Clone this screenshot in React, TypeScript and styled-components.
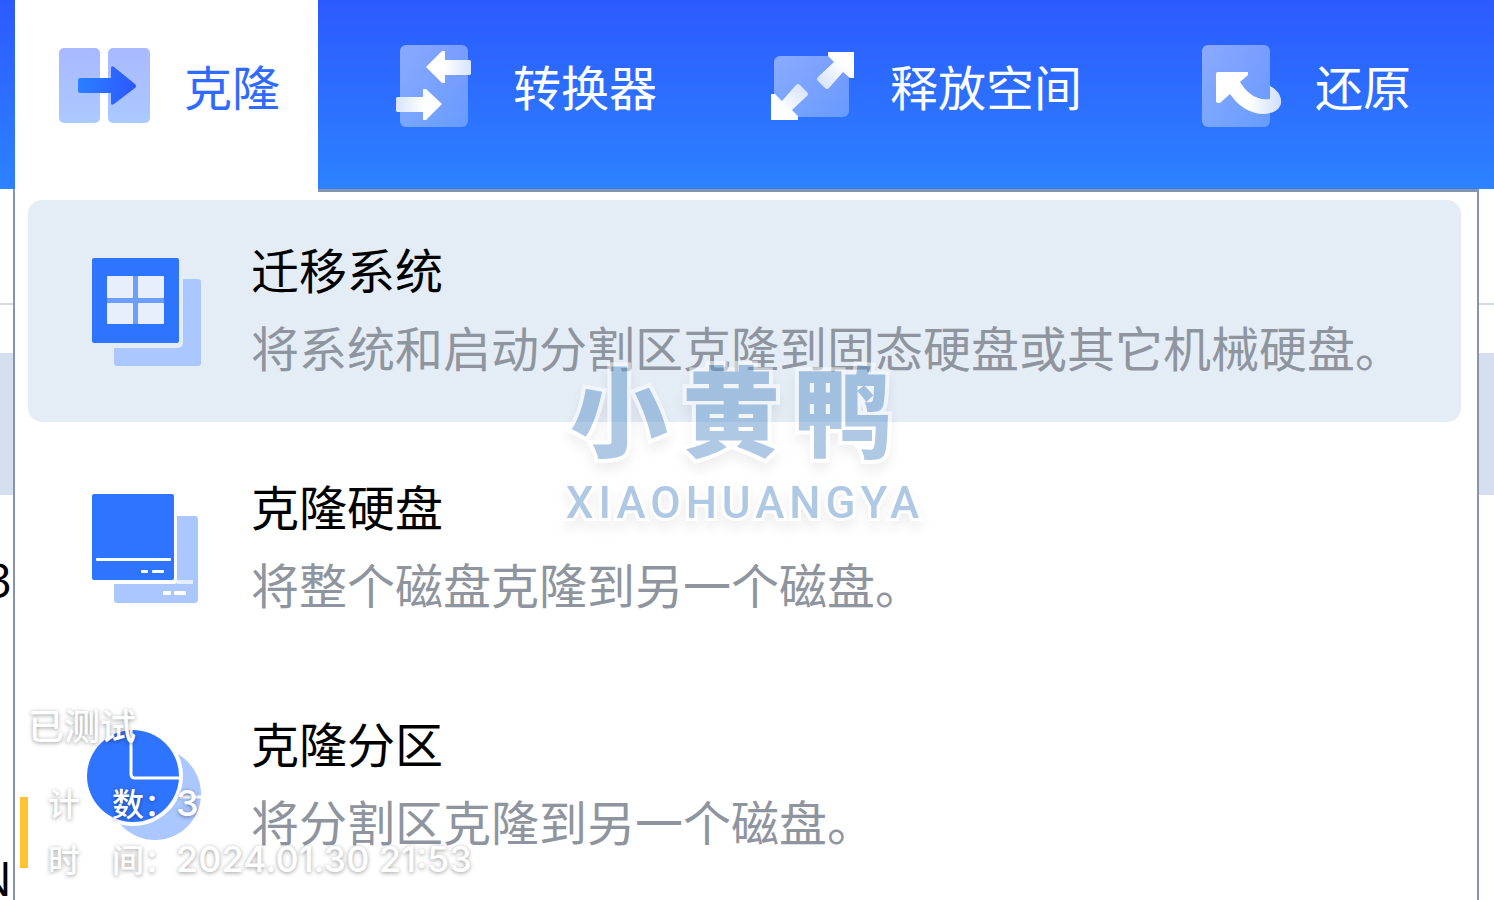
import React from "react";
import styled, { createGlobalStyle } from "styled-components";

const GlobalStyle = createGlobalStyle`
  *, *::before, *::after { box-sizing: border-box; }
  body {
    margin: 0;
    background: #fff;
    font-family: "Noto Sans CJK SC", sans-serif;
    font-weight: 400;
  }
`;

const Page = styled.div`
  position: relative;
  display: flex;
  flex-direction: column;
  height: 100vh;
  overflow: hidden;
`;

const Toolbar = styled.nav`
  display: flex;
  flex: none;
  gap: 26px;
  height: 189px;
  padding-left: 15px;
  background: linear-gradient(#2c5aff, #2c82ff);
`;

const Tab = styled.button<{ $active?: boolean }>`
  position: relative;
  z-index: 2;
  display: flex;
  flex: none;
  align-items: center;
  gap: 34px;
  height: 192px;
  padding: 0 38px 18px 44px;
  border: 0;
  background: ${(p) => (p.$active ? "#fff" : "transparent")};
  color: ${(p) => (p.$active ? "#2f6bff" : "#fff")};
  font: inherit;
  font-size: 48px;
  line-height: 60px;
  white-space: nowrap;
`;

const TabLabel = styled.span`
  padding-bottom: 4px;
`;

const TabIcon = styled.svg`
  flex: none;
  width: 91px;
  height: 84px;
  overflow: visible;
`;

const Content = styled.main`
  position: relative;
  flex: 1;
  min-height: 0;
`;

const Rows = styled.div`
  display: flex;
  flex-direction: column;
  height: 100%;
  overflow: hidden;
`;

const HeadRow = styled.div`
  flex: none;
  height: 116px;
  border-bottom: 2px solid #d3dae6;
`;

const Row = styled.div<{ $height: number; $selected?: boolean }>`
  display: flex;
  flex: none;
  align-items: center;
  height: ${(p) => p.$height}px;
  background: ${(p) => (p.$selected ? "#d5dff0" : "#fff")};
`;

const Cell = styled.span`
  display: flex;
  justify-content: flex-end;
  width: 12px;
  color: #000;
  font-family: "Open Sans", sans-serif;
  font-weight: 500;
  font-size: 48px;
  line-height: 60px;
`;

const Menu = styled.div`
  position: absolute;
  top: 0;
  left: 13px;
  right: 15px;
  display: flex;
  flex-direction: column;
  gap: 15px;
  min-height: 100%;
  padding: 8px 16px 8px 13px;
  border: 2px solid #8794ae;
  border-top-width: 3px;
  border-bottom: 0;
  background: #fff;
`;

const MenuItem = styled.button<{ $active?: boolean }>`
  --item-bg: ${(p) => (p.$active ? "#e4ecf5" : "#fff")};
  display: flex;
  flex: none;
  align-items: center;
  gap: 49px;
  width: 100%;
  height: 222px;
  padding: 0 0 0 60px;
  border: 0;
  border-radius: 14px;
  background: var(--item-bg);
  color: #000;
  font: inherit;
  font-size: 48px;
  line-height: 78px;
  text-align: left;
  white-space: nowrap;
`;

const MenuIcon = styled.svg`
  flex: none;
  width: 114px;
  height: 112px;
  overflow: visible;
`;

const MenuText = styled.span`
  display: flex;
  flex-direction: column;
  padding-bottom: 8px;
`;

const Description = styled.span`
  color: #8f959f;
`;

const Watermark = styled.div`
  position: absolute;
  inset: 0;
  z-index: 3;
  display: flex;
  flex-direction: column;
  align-items: center;
  justify-content: center;
  gap: 12px;
  padding: 0 8px 14px 0;
  color: #6195cd;
  opacity: 0.5;
  pointer-events: none;
  paint-order: stroke fill;
  -webkit-text-stroke: 8px #fff;
  filter: drop-shadow(0 8px 6px rgba(0, 0, 0, 0.12));
`;

const BrandName = styled.span`
  padding-right: 10px;
  font-weight: 900;
  font-size: 98px;
  line-height: 108px;
  letter-spacing: 14px;
`;

const BrandLatin = styled.span`
  padding-left: 4px;
  font-family: Roboto, sans-serif;
  font-weight: 500;
  font-size: 44px;
  line-height: 62px;
  letter-spacing: 5px;
  -webkit-text-stroke-width: 6px;
`;

const Stamp = styled.div`
  position: absolute;
  left: 20px;
  bottom: 12px;
  z-index: 4;
  color: #fff;
  font-family: Inter, "Noto Sans CJK SC", sans-serif;
  font-weight: 500;
  font-size: 32px;
  line-height: 54px;
  text-shadow: 0 1px 4px rgba(0, 0, 0, 0.4);
  white-space: nowrap;
  pointer-events: none;
`;

const StampTitle = styled.div`
  padding: 0 0 22px 8px;
  font-size: 36px;
`;

const StampBody = styled.div`
  display: flex;
  align-items: center;
  gap: 20px;
`;

const StampBar = styled.span`
  width: 8px;
  height: 71px;
  background: #ffc233;
`;

const StampValue = styled.span`
  font-size: 36px;
`;

const CloneIcon = () => (
  <TabIcon viewBox="0 0 91 84" aria-hidden>
    <defs>
      <linearGradient id="cloneBox" x1="0" y1="0" x2="0" y2="1">
        <stop offset="0" stopColor="#a9b9ff" />
        <stop offset="1" stopColor="#abc9ff" />
      </linearGradient>
      <linearGradient id="cloneArrow">
        <stop offset="0" stopColor="#2c80ff" />
        <stop offset="1" stopColor="#2c58ff" />
      </linearGradient>
    </defs>
    <rect x="0" y="3" width="41" height="75" rx="5" fill="url(#cloneBox)" />
    <rect x="49" y="3" width="42" height="75" rx="5" fill="url(#cloneBox)" />
    <path d="M21 33H52V23Q52 20 55 22L76 39Q78 41 76 43L55 59Q52 61 52 58V48H21Q19 48 19 46V35Q19 33 21 33Z" fill="url(#cloneArrow)" />
  </TabIcon>
);

const ConvertIcon = () => (
  <TabIcon viewBox="0 0 91 84" aria-hidden>
    <defs>
      <linearGradient id="glass" x1="0" y1="0" x2="1" y2="1">
        <stop offset="0" stopColor="#fff" stopOpacity="0.45" />
        <stop offset="1" stopColor="#fff" stopOpacity="0.28" />
      </linearGradient>
      <linearGradient id="fadeRight">
        <stop offset="0.4" stopColor="#fff" />
        <stop offset="1" stopColor="#d6e4fb" />
      </linearGradient>
      <linearGradient id="fadeLeft">
        <stop offset="0" stopColor="#d6e4fb" />
        <stop offset="0.6" stopColor="#fff" />
      </linearGradient>
    </defs>
    <rect x="12" y="0" width="68" height="82" rx="6" fill="url(#glass)" />
    <path d="M38 22L54 6H57V15H82L83 16V29L82 30H57V38H54Z" fill="url(#fadeRight)" />
    <path d="M54 59L38 75H35V67H9L8 66V53L9 52H35V44H38Z" fill="url(#fadeLeft)" />
  </TabIcon>
);

const FreeSpaceIcon = () => (
  <TabIcon viewBox="0 0 91 84" aria-hidden>
    <defs>
      <linearGradient id="fadeUp" x1="1" y1="0" x2="0" y2="1">
        <stop offset="0.3" stopColor="#fff" />
        <stop offset="1" stopColor="#cfdffc" />
      </linearGradient>
      <linearGradient id="fadeDown" x1="0" y1="1" x2="1" y2="0">
        <stop offset="0.3" stopColor="#fff" />
        <stop offset="1" stopColor="#cfdffc" />
      </linearGradient>
    </defs>
    <rect x="9" y="11" width="75" height="61" rx="6" fill="url(#glass)" />
    <path d="M63 7H89V33H85L78 27L64 43Q62 45 60 43L53 36Q51 34 53 32L69 17L63 11Z" fill="url(#fadeUp)" />
    <path d="M6 75V49H10L17 56L31 40Q33 38 35 40L42 47Q44 49 42 51L27 65L33 71V75Z" fill="url(#fadeDown)" />
  </TabIcon>
);

const RestoreIcon = () => (
  <TabIcon viewBox="0 0 91 84" aria-hidden>
    <defs>
      <linearGradient id="fadeHook">
        <stop offset="0.5" stopColor="#fff" />
        <stop offset="1" stopColor="#cfdffc" />
      </linearGradient>
    </defs>
    <rect x="12" y="0" width="68" height="82" rx="6" fill="url(#glass)" />
    <path d="M28 27H58V30L50 37C56 47 66 56 80 54V41C88 45 92 52 91 58C90 65 82 69 74 69C60 69 48 61 40 49L30 58H28Q26 58 26 56V29Q26 27 28 27Z" fill="url(#fadeHook)" />
  </TabIcon>
);

const MigrateIcon = () => (
  <MenuIcon viewBox="-3 -2 114 112" aria-hidden>
    <rect x="23" y="22" width="87" height="87" rx="3" fill="#abc7ff" />
    <rect x="-3" y="-1" width="95" height="92" rx="5" fill="var(--item-bg)" />
    <rect x="1" y="1" width="87" height="85" rx="2" fill="#2f74ff" />
    <rect x="16" y="19" width="57" height="48" rx="1" fill="#6d9efb" />
    <g fill="#e7effa">
      <rect x="16" y="19" width="26" height="22" rx="1" />
      <rect x="47" y="19" width="26" height="22" rx="1" />
      <rect x="16" y="46" width="26" height="21" rx="1" />
      <rect x="47" y="46" width="26" height="21" rx="1" />
    </g>
  </MenuIcon>
);

const DiskIcon = () => (
  <MenuIcon viewBox="-3 -1 114 112" aria-hidden>
    <rect x="23" y="23" width="84" height="87" rx="3" fill="#abc7ff" />
    <rect x="-3" y="-1" width="89" height="92" rx="3" fill="var(--item-bg)" />
    <rect x="86" y="87" width="16" height="4" fill="#e6eeff" />
    <rect x="1" y="1" width="82" height="86" rx="2" fill="#2f74ff" />
    <g fill="#fff">
      <rect x="5" y="65" width="75" height="3" rx="1" />
      <rect x="50" y="77" width="7" height="3" rx="1" />
      <rect x="61" y="77" width="12" height="3" rx="1" />
      <rect x="72" y="98" width="8" height="4" rx="1" />
      <rect x="83" y="98" width="12" height="4" rx="1" />
    </g>
  </MenuIcon>
);

const PartitionIcon = () => (
  <MenuIcon viewBox="0 -1 114 112" aria-hidden>
    <circle cx="67" cy="64" r="46" fill="#abc7ff" />
    <path d="M92 67H114" stroke="#fff" strokeWidth="3" />
    <circle cx="45" cy="46" r="50" fill="var(--item-bg)" />
    <circle cx="45" cy="46" r="46" fill="#2f74ff" />
    <path d="M43 0V44Q43 48 47 48H92" fill="none" stroke="#fff" strokeWidth="3" />
  </MenuIcon>
);

const tabs = [
  { label: "克隆", Icon: CloneIcon, active: true },
  { label: "转换器", Icon: ConvertIcon },
  { label: "释放空间", Icon: FreeSpaceIcon },
  { label: "还原", Icon: RestoreIcon },
];

const items = [
  { title: "迁移系统", text: "将系统和启动分割区克隆到固态硬盘或其它机械硬盘。", Icon: MigrateIcon, active: true },
  { title: "克隆硬盘", text: "将整个磁盘克隆到另一个磁盘。", Icon: DiskIcon },
  { title: "克隆分区", text: "将分割区克隆到另一个磁盘。", Icon: PartitionIcon },
];

export default function App() {
  return (
    <Page>
      <GlobalStyle />
      <Toolbar>
        {tabs.map(({ label, Icon, active }) => (
          <Tab key={label} type="button" $active={active}>
            <Icon />
            <TabLabel>{label}</TabLabel>
          </Tab>
        ))}
      </Toolbar>
      <Content>
        <Rows>
          <HeadRow />
          <Row $height={48} />
          <Row $height={142} $selected />
          <Row $height={170}>
            <Cell>3</Cell>
          </Row>
          <Row $height={128} />
          <Row $height={170}>
            <Cell>N</Cell>
          </Row>
        </Rows>
        <Menu>
          {items.map(({ title, text, Icon, active }) => (
            <MenuItem key={title} type="button" $active={active}>
              <Icon />
              <MenuText>
                <span>{title}</span>
                <Description>{text}</Description>
              </MenuText>
            </MenuItem>
          ))}
        </Menu>
      </Content>
      <Watermark>
        <BrandName>小黄鸭</BrandName>
        <BrandLatin>XIAOHUANGYA</BrandLatin>
      </Watermark>
      <Stamp>
        <StampTitle>已测试</StampTitle>
        <StampBody>
          <StampBar />
          <div>
            <div>
              计　数：<StampValue>3</StampValue>
            </div>
            <div>
              时　间：<StampValue>2024.01.30 21:53</StampValue>
            </div>
          </div>
        </StampBody>
      </Stamp>
    </Page>
  );
}
